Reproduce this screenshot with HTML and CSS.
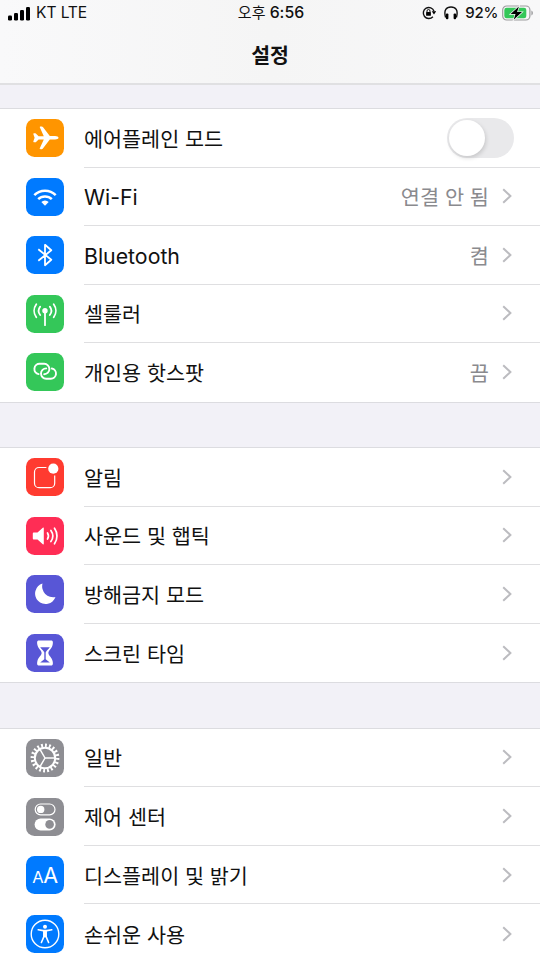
FILE: index.html
```html
<!DOCTYPE html>
<html lang="ko">
<head>
  <meta charset="UTF-8" />
  <meta name="viewport" content="width=device-width, initial-scale=1.0"/>
  <title>설정</title>
  <link rel="stylesheet" href="styles.css">
</head>
<body>
  <header class="navbar">
    <div class="status">
      <div class="status-left">
        <svg class="signal" viewBox="0 0 22 15">
          <rect x="0" y="9.5" width="4" height="5" rx="1.2"/>
          <rect x="6" y="7" width="4" height="7.5" rx="1.2"/>
          <rect x="12" y="4" width="4" height="10.5" rx="1.2"/>
          <rect x="18" y="1" width="4" height="13.5" rx="1.2"/>
        </svg>
        <span class="carrier">KT LTE</span>
      </div>
      <div class="clock">오후 <span>6:56</span></div>
      <div class="status-right">
        <svg class="lock" viewBox="0 0 14 14">
          <path d="M10.9 10.7A5.5 5.5 0 1 1 12 5.2" fill="none" stroke="#111" stroke-width="1.4"/>
          <path d="M9.7 5.2H14.2L12 8.4Z"/>
          <rect x="4.1" y="6" width="4.8" height="3.8" rx=".5"/>
          <path d="M5 6.3V5a1.5 1.5 0 0 1 3 0v1.3" fill="none" stroke="#111"/>
        </svg>
        <svg class="headphones" viewBox="0 0 14 14">
          <path d="M1.6 11.5C-.6 4 2.5 1 7 1s7.600 3 5.400 10.500" fill="none" stroke="#111" stroke-width="1.4"/>
          <rect x="1.9" y="7.6" width="2.5" height="5.6" rx="1"/>
          <rect x="9.6" y="7.6" width="2.5" height="5.6" rx="1"/>
        </svg>
        <span class="percent">92%</span>
        <svg class="battery" viewBox="0 0 32 16">
          <rect x=".7" y="1" width="27.2" height="14" rx="4" fill="none" stroke="#9c9c9e" stroke-width="1.2"/>
          <path d="M29.4 5.5c2 .8 2 4.2 0 5z" fill="#9c9c9e"/>
          <rect x="2.3" y="2.7" width="22" height="10.6" rx="2.3" fill="#34c759"/>
          <path d="M16.9 1.5L8.6 9h4.9l-1.8 5.7L20 7.1h-4.9z" stroke="#f7f7f7" stroke-width="1.4" paint-order="stroke"/>
        </svg>
      </div>
    </div>
    <h1>설정</h1>
  </header>

  <main>
    <section class="group">
      <div class="row">
        <svg class="icon orange" viewBox="0 0 38 38">
          <path d="M7.4 15.3c-.2-.7.2-1 .8-1h1c.5 0 .8.2 1.1.6l2.3 2.3h5.2L13.9 8.6c-.3-.8 0-1.2.7-1.2h1.1c.5 0 .9.2 1.2.6l6.9 9.1h5.3c1.900 0 3.400.8 3.400 1.700s-1.500 1.700-3.400 1.700h-5.300L16.900 29.600c-.3.4-.7.6-1.200.6h-1.100c-.7 0-1-.4-.7-1.200l3.900-8.600h-5.200l-2.300 2.300c-.3.4-.6.6-1.100.6h-1c-.6 0-1-.3-.8-1l1.200-3.500z" fill="#fff"/>
        </svg>
        <div class="row-body">
          <span class="label">에어플레인 모드</span>
          <span class="toggle"></span>
        </div>
      </div>
      <div class="row">
        <svg class="icon blue" viewBox="0 0 38 38">
          <g fill="none" stroke="#fff" stroke-width="2.5">
            <path d="M8.3 17.2a15.2 15.2 0 0 1 21.4 0"/>
            <path d="M12.2 21.2a9.6 9.6 0 0 1 13.6 0"/>
          </g>
          <path d="M19 27.8l-3.7-3.7a5.2 5.2 0 0 1 7.4 0z" fill="#fff"/>
        </svg>
        <div class="row-body">
          <span class="label latin">Wi-Fi</span>
          <span class="value">연결 안 됨</span>
          <svg class="chevron" viewBox="0 0 10 16"><path d="M1.2 1.2L8.4 8l-7.2 6.8"/></svg>
        </div>
      </div>
      <div class="row">
        <svg class="icon blue" viewBox="0 0 38 38">
          <path d="M12.3 13.2l13 10.6L19 29.2V8.8l6.3 5.4-13 10.6" fill="none" stroke="#fff" stroke-width="1.8" stroke-linejoin="round"/>
        </svg>
        <div class="row-body">
          <span class="label latin">Bluetooth</span>
          <span class="value">켬</span>
          <svg class="chevron" viewBox="0 0 10 16"><path d="M1.2 1.2L8.4 8l-7.2 6.8"/></svg>
        </div>
      </div>
      <div class="row">
        <svg class="icon green" viewBox="0 0 38 38">
          <circle cx="19" cy="15.7" r="2.7" fill="#fff"/>
          <g fill="none" stroke="#fff" stroke-width="1.8" stroke-linecap="round">
            <path d="M19 17v13.2"/>
            <path d="M14.2 11.6a6.8 6.8 0 0 0 0 8.4M23.8 11.6a6.8 6.8 0 0 1 0 8.4"/>
            <path d="M10.3 9.2a11 11 0 0 0 0 13M27.7 9.2a11 11 0 0 1 0 13"/>
          </g>
        </svg>
        <div class="row-body">
          <span class="label">셀룰러</span>
          <svg class="chevron" viewBox="0 0 10 16"><path d="M1.2 1.2L8.4 8l-7.2 6.8"/></svg>
        </div>
      </div>
      <div class="row">
        <svg class="icon green" viewBox="0 0 38 38">
          <g fill="none" stroke="#fff" stroke-width="1.9" stroke-linecap="round">
            <path d="M12.6 21.1a5.200 5.200 0 0 1 1.200-10.300h4.400a5.200 5.200 0 0 1 0 10.400"/>
            <path d="M25.8 15.500a5.200 5.200 0 0 1-1.200 10.300h-4.400a5.200 5.200 0 0 1 0-10.400"/>
          </g>
        </svg>
        <div class="row-body">
          <span class="label">개인용 핫스팟</span>
          <span class="value">끔</span>
          <svg class="chevron" viewBox="0 0 10 16"><path d="M1.2 1.2L8.4 8l-7.2 6.8"/></svg>
        </div>
      </div>
    </section>

    <section class="group">
      <div class="row">
        <svg class="icon red" viewBox="0 0 38 38">
          <path d="M20.4 9.5H13A4.500 4.500 0 0 0 8.500 14v11.200a4.500 4.500 0 0 0 4.500 4.500h11.200a4.500 4.500 0 0 0 4.500-4.500V17.500" fill="none" stroke="#fff" stroke-width="1.2"/>
          <circle cx="27.3" cy="10.7" r="5.1" fill="#fff"/>
        </svg>
        <div class="row-body">
          <span class="label">알림</span>
          <svg class="chevron" viewBox="0 0 10 16"><path d="M1.2 1.2L8.4 8l-7.2 6.8"/></svg>
        </div>
      </div>
      <div class="row">
        <svg class="icon pink" viewBox="0 0 38 38">
          <path d="M8 15.5h3.500l5.300-4.700c.5-.4 1-.2 1 .4v15.600c0 .6-.5.8-1 .4l-5.300-4.700H8c-.8 0-1.200-.4-1.200-1.200v-4.600c0-.8.4-1.200 1.200-1.200z" fill="#fff"/>
          <g fill="none" stroke="#fff" stroke-width="1.7" stroke-linecap="round">
            <path d="M21.5 16a5.500 5.500 0 0 1 0 6"/>
            <path d="M24.9 13.500a9.500 9.500 0 0 1 0 11"/>
            <path d="M28.5 11.200a13.500 13.500 0 0 1 0 15.600"/>
          </g>
        </svg>
        <div class="row-body">
          <span class="label">사운드 및 햅틱</span>
          <svg class="chevron" viewBox="0 0 10 16"><path d="M1.2 1.2L8.4 8l-7.2 6.8"/></svg>
        </div>
      </div>
      <div class="row">
        <svg class="icon purple" viewBox="0 0 38 38">
          <path d="M16.500 8.500a11 11 0 0 0 13 13.500A10.500 10.500 0 1 1 16.500 8.500z" fill="#fff"/>
        </svg>
        <div class="row-body">
          <span class="label">방해금지 모드</span>
          <svg class="chevron" viewBox="0 0 10 16"><path d="M1.2 1.2L8.4 8l-7.2 6.8"/></svg>
        </div>
      </div>
      <div class="row">
        <svg class="icon purple" viewBox="0 0 38 38">
          <path d="M12.300 6.500h13.400c1.400 0 1.400 2.200.9 4.500-.8 3.600-4.200 5.600-4.200 8s3.400 4.400 4.200 8c.5 2.300.5 4.500-.9 4.500H12.300c-1.400 0-1.400-2.200-.9-4.500.8-3.600 4.200-5.600 4.200-8s-3.400-4.400-4.200-8c-.5-2.300-.5-4.500.9-4.500z" fill="#fff"/>
          <path d="M14.200 13.200h9.600c-1 2-3.300 3-4.100 5.200v6.900l4.100 3.300h-9.600l4.100-3.300v-6.900c-.8-2.200-3.100-3.200-4.100-5.200z" fill="#5856d6"/>
        </svg>
        <div class="row-body">
          <span class="label">스크린 타임</span>
          <svg class="chevron" viewBox="0 0 10 16"><path d="M1.2 1.2L8.4 8l-7.2 6.8"/></svg>
        </div>
      </div>
    </section>

    <section class="group">
      <div class="row">
        <svg class="icon gray" viewBox="0 0 38 38">
          <g fill="none" stroke="#fff">
            <circle cx="19" cy="19" r="10.2" stroke-width="2"/>
            <circle cx="19" cy="19" r="12.5" stroke-width="3.8" pathLength="80" stroke-dasharray="1.9 2.1"/>
            <path d="M19 19h10M19 19l-5-8.7M19 19l-5 8.7" stroke-width="1.5"/>
          </g>
        </svg>
        <div class="row-body">
          <span class="label">일반</span>
          <svg class="chevron" viewBox="0 0 10 16"><path d="M1.2 1.2L8.4 8l-7.2 6.8"/></svg>
        </div>
      </div>
      <div class="row">
        <svg class="icon gray" viewBox="0 0 38 38">
          <rect x="9.2" y="6" width="19.8" height="10.8" rx="5.4" fill="none" stroke="#fff" stroke-width="1.2"/>
          <circle cx="14.7" cy="11.4" r="3.7" fill="#fff"/>
          <rect x="8.6" y="20.4" width="21" height="12" rx="6" fill="#fff"/>
          <circle cx="23.6" cy="26.4" r="4.3" fill="#8e8e93"/>
        </svg>
        <div class="row-body">
          <span class="label">제어 센터</span>
          <svg class="chevron" viewBox="0 0 10 16"><path d="M1.2 1.2L8.4 8l-7.2 6.8"/></svg>
        </div>
      </div>
      <div class="row">
        <svg class="icon blue" viewBox="0 0 38 38">
          <text x="6.3" y="27" class="aa" font-size="16.5">A</text>
          <text x="17.3" y="27" class="aa" font-size="21.5">A</text>
        </svg>
        <div class="row-body">
          <span class="label">디스플레이 및 밝기</span>
          <svg class="chevron" viewBox="0 0 10 16"><path d="M1.2 1.2L8.4 8l-7.2 6.8"/></svg>
        </div>
      </div>
      <div class="row">
        <svg class="icon blue" viewBox="0 0 38 38">
          <circle cx="19" cy="19" r="13.8" fill="none" stroke="#fff" stroke-width="1.4"/>
          <circle cx="19" cy="11.8" r="2" fill="#fff"/>
          <path d="M12.2 14.8l5 .8h3.6l5-.8M17.900 16v5.500l-2.500 6M20.100 16v5.500l2.500 6" fill="none" stroke="#fff" stroke-width="1.6" stroke-linecap="round"/>
          <path d="M17.200 15.500h3.600v6.800h-3.600z" fill="#fff"/>
        </svg>
        <div class="row-body">
          <span class="label">손쉬운 사용</span>
          <svg class="chevron" viewBox="0 0 10 16"><path d="M1.2 1.2L8.4 8l-7.2 6.8"/></svg>
        </div>
      </div>
    </section>
  </main>
</body>
</html>
```
FILE: styles.css
```css
* {
  margin: 0;
  padding: 0;
  box-sizing: border-box;
}
html, body {
  height: 100%;
  overflow: hidden;
}
body {
  font-family: Inter, "Noto Sans CJK KR", sans-serif;
  background: #f2f1f7;
  color: #111;
}
svg {
  display: block;
  flex: none;
}
.navbar {
  height: 85px;
  background: linear-gradient(to right, #f9f9fa, #f5f5f5 50%, #f8f8f9);
  border-bottom: 2px solid #e0e0e2;
}
.status {
  display: grid;
  grid-template-columns: 1fr auto 1fr;
  align-items: center;
  height: 26px;
  padding: 0 6px 0 8px;
  font-size: 15px;
  line-height: 26px;
}
.status-left,
.status-right {
  display: flex;
  align-items: center;
}
.status-right {
  justify-content: flex-end;
}
.signal {
  width: 22px;
  height: 15px;
  margin-right: 6px;
}
.carrier {
  font-size: 15.6px;
  letter-spacing: -0.1px;
}
.clock span {
  font-size: 15.8px;
  font-weight: 500;
}
.percent {
  font-size: 15px;
  font-weight: 500;
  letter-spacing: -0.3px;
  margin-right: 4px;
}
.lock {
  width: 14px;
  height: 14px;
  margin-right: 8px;
}
.headphones {
  width: 14px;
  height: 14px;
  margin-right: 7px;
}
.battery {
  width: 32px;
  height: 16px;
}
h1 {
  font-size: 20.5px;
  font-weight: 700;
  line-height: 59px;
  text-align: center;
}
main {
  padding-top: 23px;
}
.group {
  margin-bottom: 44.4px;
  background: #fff;
  border-top: 1px solid #dcdce0;
  border-bottom: 1px solid #dcdce0;
}
.row {
  display: flex;
  align-items: center;
  height: 58.55px;
  padding-left: 26px;
}
.icon {
  width: 38px;
  height: 38px;
  margin-right: 20px;
  border-radius: 8.5px;
}
.orange { background: #ff9500; }
.blue { background: #007aff; }
.green { background: #34c759; }
.red { background: #ff3b30; }
.pink { background: #ff2d55; }
.purple { background: #5856d6; }
.gray { background: #8e8e93; }
.row-body {
  display: flex;
  align-items: center;
  flex: 1;
  height: 100%;
  padding-right: 28px;
  border-bottom: 1px solid #dfdfe1;
}
.row:last-child .row-body {
  border-bottom: none;
}
.label {
  flex: 1;
  font-size: 20.7px;
}
.latin {
  padding-top: 2px;
  font-size: 21.3px;
}
.value {
  margin-right: 13px;
  font-size: 20.8px;
  color: #8a8a8e;
}
.chevron {
  width: 10px;
  height: 16px;
  fill: none;
  stroke: #bcbcc0;
  stroke-width: 2;
}
.toggle {
  display: flex;
  width: 67px;
  height: 40px;
  margin-right: -2px;
  padding: 2px;
  border-radius: 20px;
  background: #e9e9eb;
}
.toggle::before {
  content: "";
  width: 36px;
  height: 36px;
  border-radius: 50%;
  background: #fff;
  box-shadow: 1px 2px 4px rgba(0,0,0,0.15);
}
.aa {
  font-family: Inter, sans-serif;
  fill: #fff;
}
```
